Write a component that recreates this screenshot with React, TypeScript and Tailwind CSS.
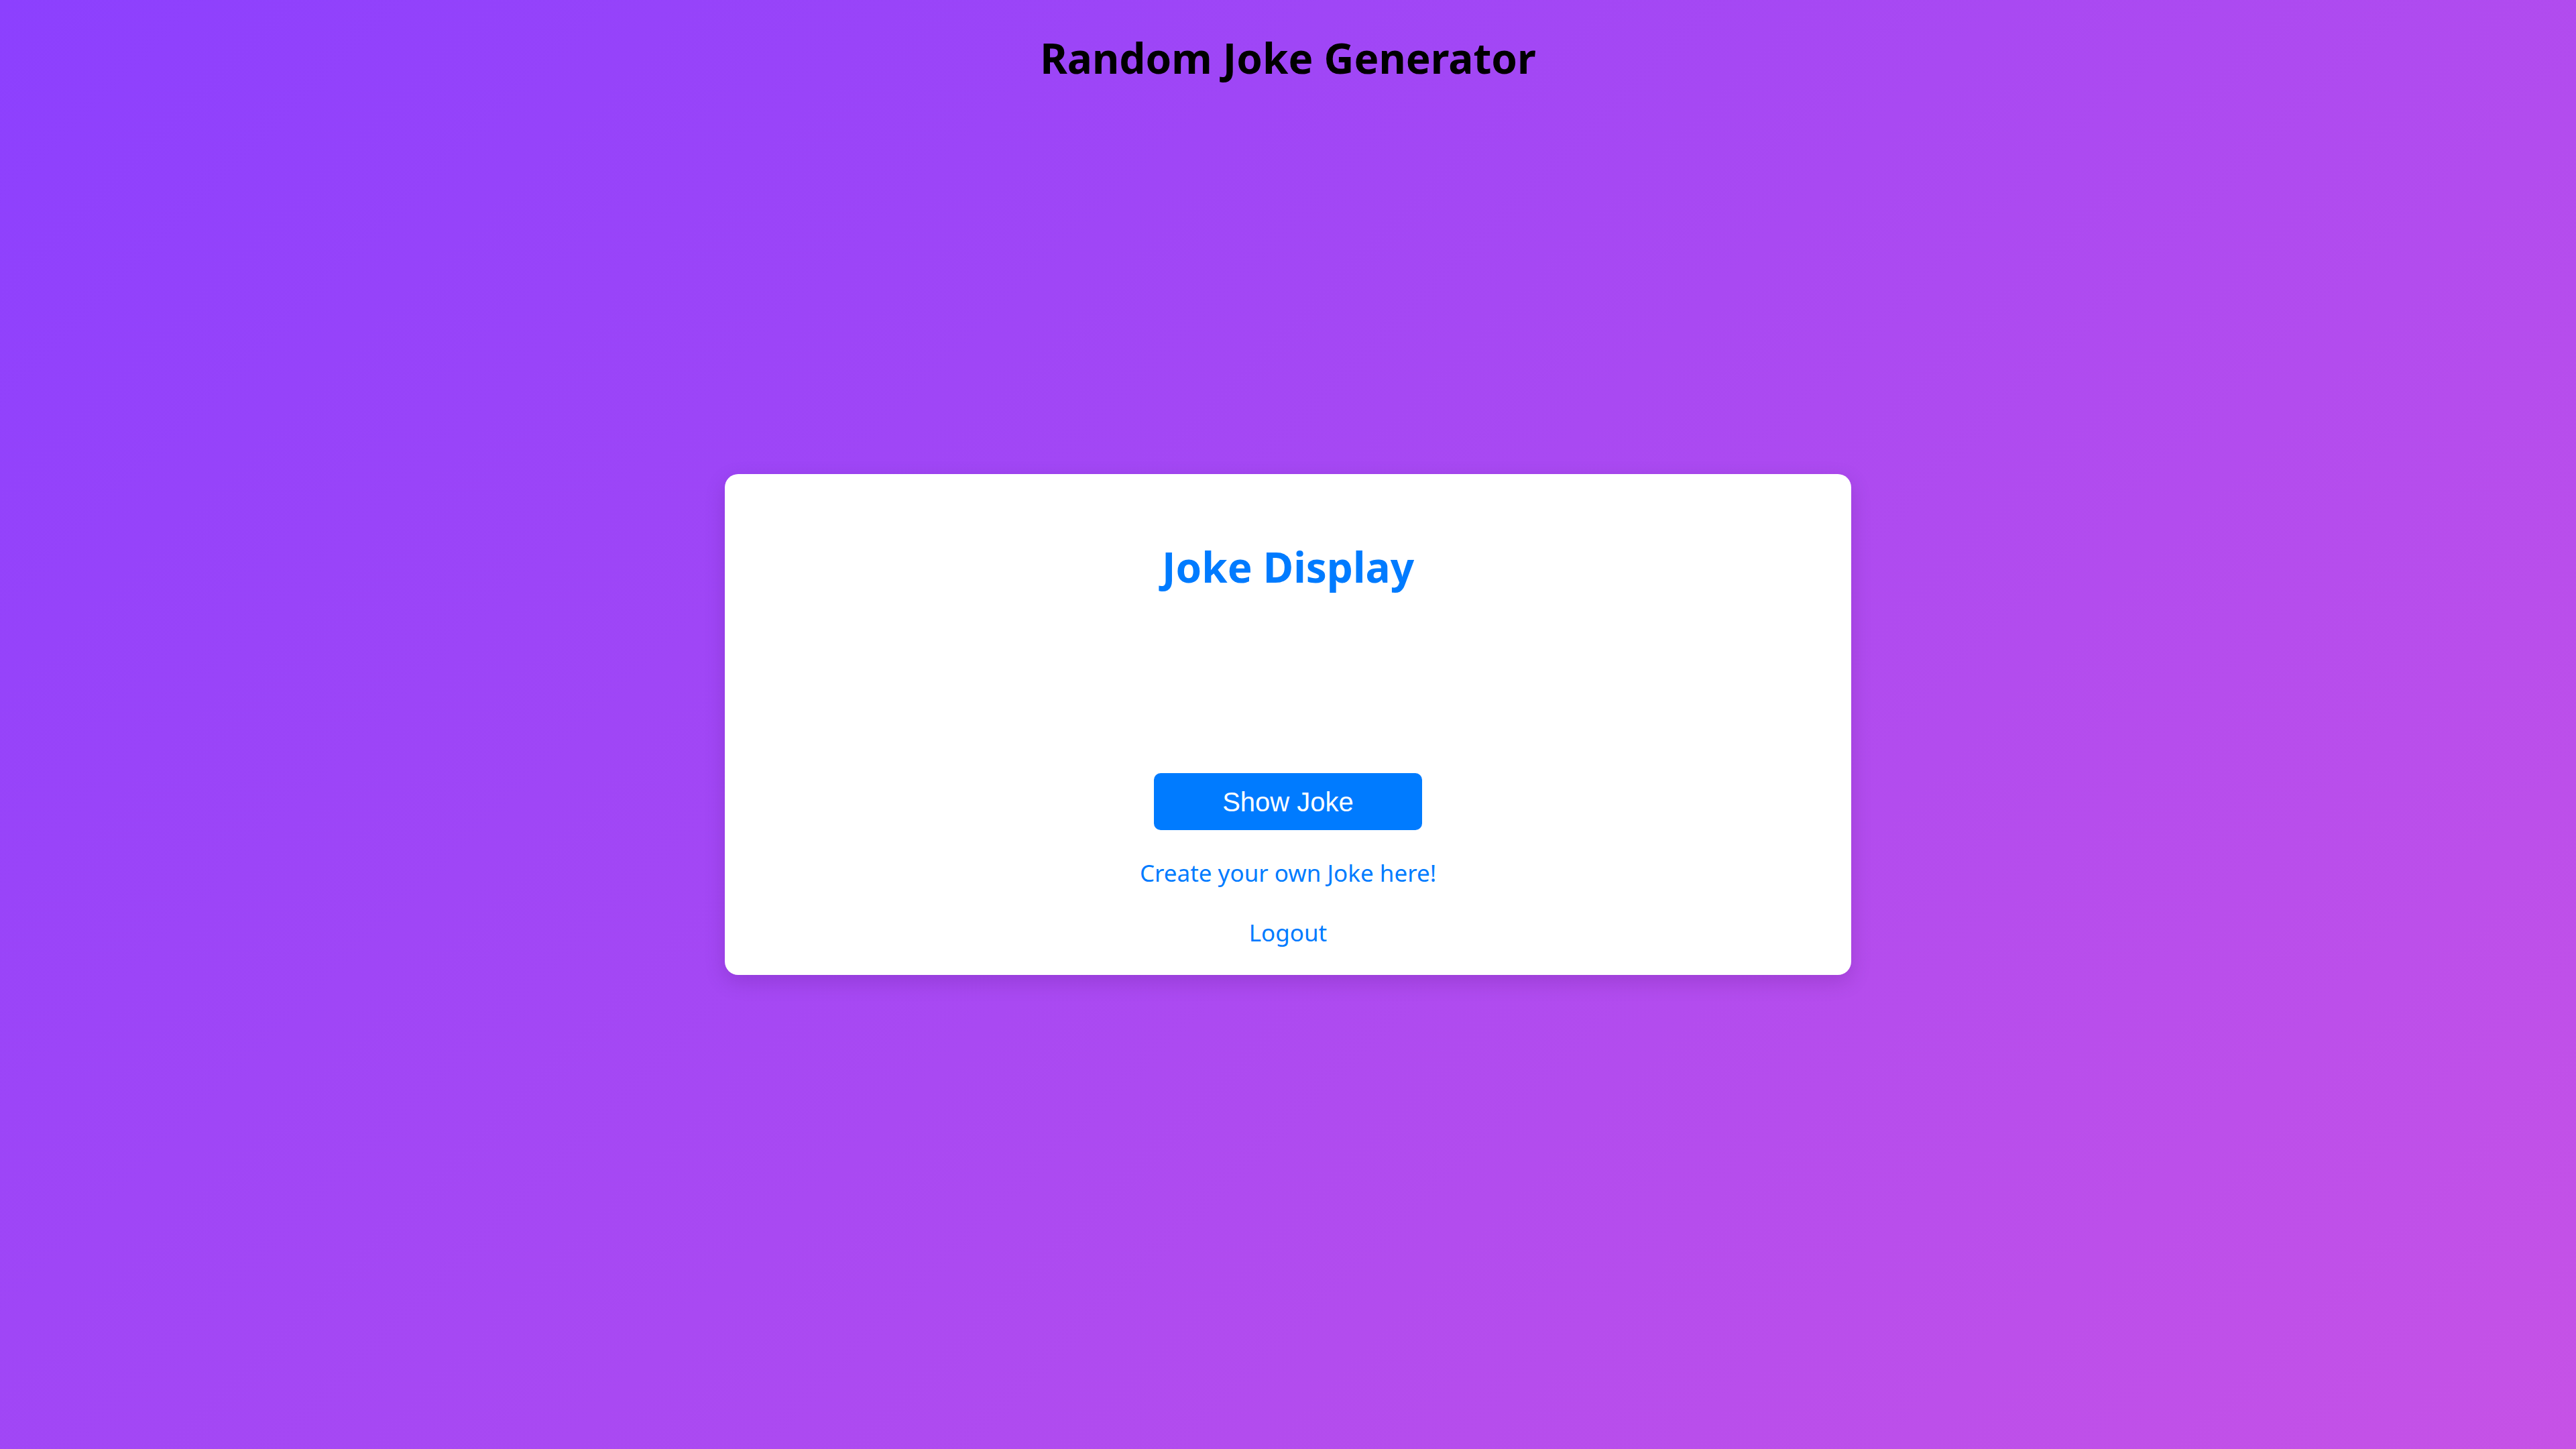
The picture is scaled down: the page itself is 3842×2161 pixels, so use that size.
import { useState } from 'react';

export default function App() {
    const [joke, setJoke] = useState('');

    const jokes = [
        'Why do programmers prefer dark mode? Because light attracts bugs.',
        'I told my computer I needed a break, and it said: no problem, I will go to sleep.',
    ];

    return (
        <div
            className="h-screen w-full grid grid-rows-[1fr_auto_1fr] bg-[linear-gradient(135deg,#8c40fe_0%,#c652e6_100%)]"
            style={{ fontFamily: '"Noto Sans", "Open Sans", sans-serif' }}
        >
            {/* Page title */}
            <div className="flex justify-center items-start pt-[46px]">
                <h1 className="text-[62px] leading-[80px] font-bold text-black">Random Joke Generator</h1>
            </div>

            {/* Card */}
            <div className="flex justify-center">
                <div className="w-[1680px] bg-white rounded-[20px] shadow-[0_10px_30px_rgba(60,0,90,0.18)] pt-[98px] pb-[40px] flex flex-col items-center">
                    <h2 className="text-[62px] leading-[80px] font-bold text-[#007bff]">Joke Display</h2>

                    {/* Joke area, empty until the button is clicked */}
                    <p className="h-[268px] flex items-center justify-center text-[40px] text-[#333] px-[80px] text-center">
                        {joke}
                    </p>

                    <button
                        onClick={() => setJoke(jokes[Math.floor(Math.random() * jokes.length)])}
                        className="w-[400px] h-[85px] rounded-[10px] bg-[#007bff] text-white text-[40px] font-['Liberation_Sans',Arial,sans-serif]"
                    >
                        Show Joke
                    </button>

                    <a href="#" className="mt-[41px] text-[35px] leading-[46px] text-[#007bff]">
                        Create your own Joke here!
                    </a>
                    <a href="#" className="mt-[43px] text-[35px] leading-[46px] text-[#007bff]">
                        Logout
                    </a>
                </div>
            </div>

            <div />
        </div>
    );
}
